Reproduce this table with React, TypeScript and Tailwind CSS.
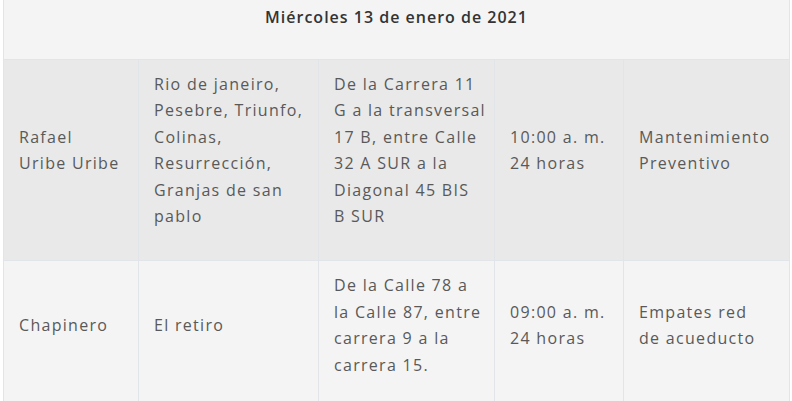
import type { ReactNode } from 'react'

type Row = {
  bg: string
  cells: ReactNode[]
}

const widths = ['w-[135px]', 'w-[180px]', 'w-[176px]', 'w-[129px]', 'w-[166px]']

const rows: Row[] = [
  {
    bg: 'bg-[#e9e9e9]',
    cells: [
      <>Rafael<br />Uribe Uribe</>,
      <>Rio de janeiro,<br />Pesebre, Triunfo,<br />Colinas,<br />Resurrección,<br />Granjas de san<br />pablo</>,
      <>De la Carrera 11<br />G a la transversal<br />17 B, entre Calle<br />32 A SUR a la<br />Diagonal 45 BIS<br />B SUR</>,
      <>10:00 a. m.<br />24 horas</>,
      <>Mantenimiento<br />Preventivo</>
    ]
  },
  {
    bg: 'bg-[#f4f4f4]',
    cells: [
      <>Chapinero</>,
      <>El retiro</>,
      <>De la Calle 78 a<br />la Calle 87, entre<br />carrera 9 a la<br />carrera 15.</>,
      <>09:00 a. m.<br />24 horas</>,
      <>Empates red<br />de acueducto</>
    ]
  }
]

export default function App() {
  return (
    <div
      className="w-[792px] h-[401px] overflow-hidden bg-white"
      style={{ fontFamily: '"Open Sans", "Liberation Sans", sans-serif' }}
    >
      <div className="ml-[3px] w-[787px] border-x border-[#e1e4e9]">
        <div className="h-[60px] bg-[#f4f4f4] border-b border-[#e1e4e9] pt-[5px] text-center text-[16px] leading-6 font-semibold tracking-[1px] text-[#333]">
          Miércoles 13 de enero de 2021
        </div>
        {rows.map((row, i) => (
          <div key={i} className={`flex border-b border-[#e1e4e9] ${row.bg}`}>
            {row.cells.map((c, j) => (
              <div
                key={j}
                className={`${widths[j]} shrink-0 flex items-center px-[15px] pt-[11px] pb-[31px] text-[16px] tracking-[1.3px] leading-[26.4px] text-[#595959] ${j < 4 ? 'border-r border-[#e1e4e9]' : ''}`}
              >
                <p className="whitespace-nowrap">{c}</p>
              </div>
            ))}
          </div>
        ))}
      </div>
    </div>
  )
}
